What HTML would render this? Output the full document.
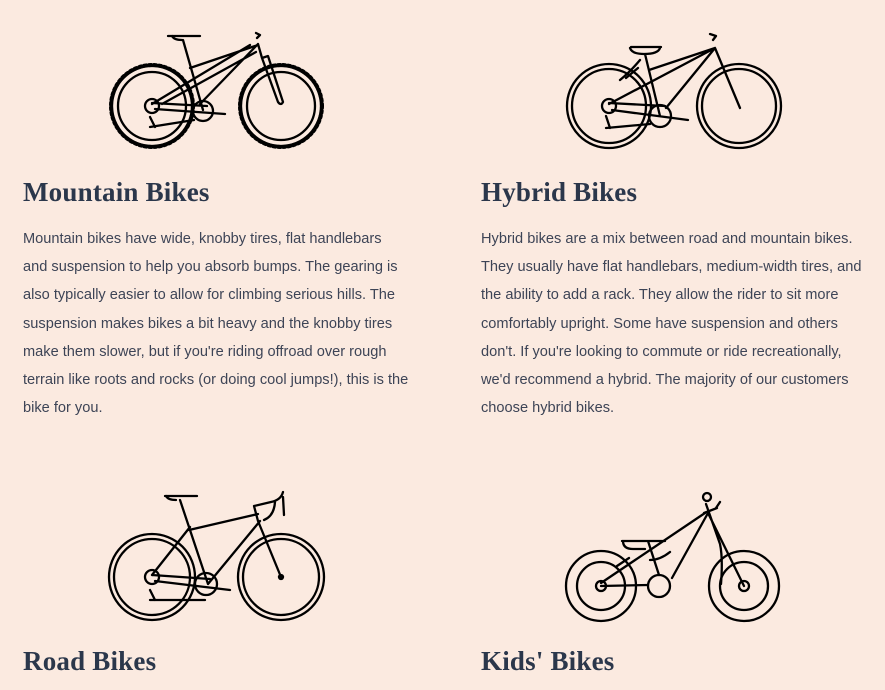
<!DOCTYPE html>
<html><head><meta charset="utf-8"><style>
html,body{margin:0;padding:0;background:#fbeae0;width:885px;height:690px;overflow:hidden;position:relative}
h2{position:absolute;margin:0;font-family:"Liberation Serif",serif;font-weight:bold;font-size:27px;color:#2b374b;letter-spacing:0.2px}
p{position:absolute;margin:0;font-family:"Liberation Sans",sans-serif;font-size:14.6px;line-height:28.2px;color:#3d4456;white-space:nowrap;letter-spacing:0}
svg{position:absolute;left:0;top:0}
</style></head><body>
<svg width="885" height="690" fill="none" stroke="#000" stroke-width="2.3" stroke-linecap="round" stroke-linejoin="round">
<g>
<circle cx="152" cy="106" r="41" stroke-dasharray="2 3" stroke-width="4"/>
<circle cx="152" cy="106" r="40"/><circle cx="152" cy="106" r="34"/>
<circle cx="281" cy="106" r="41" stroke-dasharray="2 3" stroke-width="4"/>
<circle cx="281" cy="106" r="40"/><circle cx="281" cy="106" r="34"/>
<circle cx="152" cy="106" r="7"/><circle cx="203" cy="111" r="10"/>
<path d="M168 36h32M172 36q2 4 10 4M183 40L203 110M190 68L258 45M152 104L250 45M162 104L256 52M200 104L258 44M256 33l4 2-3 3M258 44L262 58M262 58l16 44q3 4 5 0L268 56zM152 103L207 106M155 109L225 114M150 127L194 120M150 117l5 10"/>
</g>
<g>
<circle cx="609" cy="106" r="42"/><circle cx="609" cy="106" r="37"/>
<circle cx="739" cy="106" r="42"/><circle cx="739" cy="106" r="37"/>
<circle cx="609" cy="106" r="7"/><circle cx="660" cy="116" r="11"/>
<path d="M631 47h30M630 48q2 6 14 6 14 0 16-6M645 54L660 116M649 70L715 48M609 104L715 48M666 108L715 48M710 34l6 2-3 4M715 48L740 108M609 103L665 106M612 110L688 120M606 128L650 124M606 116l4 12M626 78l12-10M620 80q10-8 20-20"/>
</g>
<g>
<circle cx="152" cy="577" r="43"/><circle cx="152" cy="577" r="38"/>
<circle cx="281" cy="577" r="43"/><circle cx="281" cy="577" r="38"/>
<circle cx="152" cy="577" r="7"/><circle cx="206" cy="584" r="11"/>
<path d="M165 496h32M166 496q2 4 10 4M180 500L208 584M189 530L258 514M152 575L190 527M208 584L260 521M254 506l17-4M254 506l4 15M258 521L281 577M264 520q10-4 11-18M271 502q10-2 12-10M283 497L284 515M152 575L210 579M155 581L230 590M150 600L205 600M150 590l5 10"/>
<circle cx="281" cy="577" r="2"/>
</g>
<g>
<circle cx="601" cy="586" r="35"/><circle cx="601" cy="586" r="24"/>
<circle cx="744" cy="586" r="35"/><circle cx="744" cy="586" r="24"/>
<circle cx="601" cy="586" r="5"/><circle cx="744" cy="586" r="5"/><circle cx="659" cy="586" r="11"/>
<path d="M622 541h43M623 541q0 8 10 8h12M648 541L659 575M601 586L648 585M601 583L705 513M672 578L708 513M704 513l13-5M706 504l14 40q3 14 1 40M708 513L744 586M716 508l4-6M617 566l12-8M650 560q10 0 20-8"/>
<circle cx="707" cy="497" r="4"/>
</g>
</svg>
<h2 style="left:23px;top:177px">Mountain Bikes</h2>
<p style="left:23px;top:225px">Mountain bikes have wide, knobby tires, flat handlebars<br>and suspension to help you absorb bumps. The gearing is<br>also typically easier to allow for climbing serious hills. The<br>suspension makes bikes a bit heavy and the knobby tires<br>make them slower, but if you're riding offroad over rough<br>terrain like roots and rocks (or doing cool jumps!), this is the<br>bike for you.</p>
<h2 style="left:481px;top:177px">Hybrid Bikes</h2>
<p style="left:481px;top:225px">Hybrid bikes are a mix between road and mountain bikes.<br>They usually have flat handlebars, medium-width tires, and<br>the ability to add a rack. They allow the rider to sit more<br>comfortably upright. Some have suspension and others<br>don't. If you're looking to commute or ride recreationally,<br>we'd recommend a hybrid. The majority of our customers<br>choose hybrid bikes.</p>
<h2 style="left:23px;top:646px">Road Bikes</h2>
<h2 style="left:481px;top:646px">Kids' Bikes</h2>
</body></html>
